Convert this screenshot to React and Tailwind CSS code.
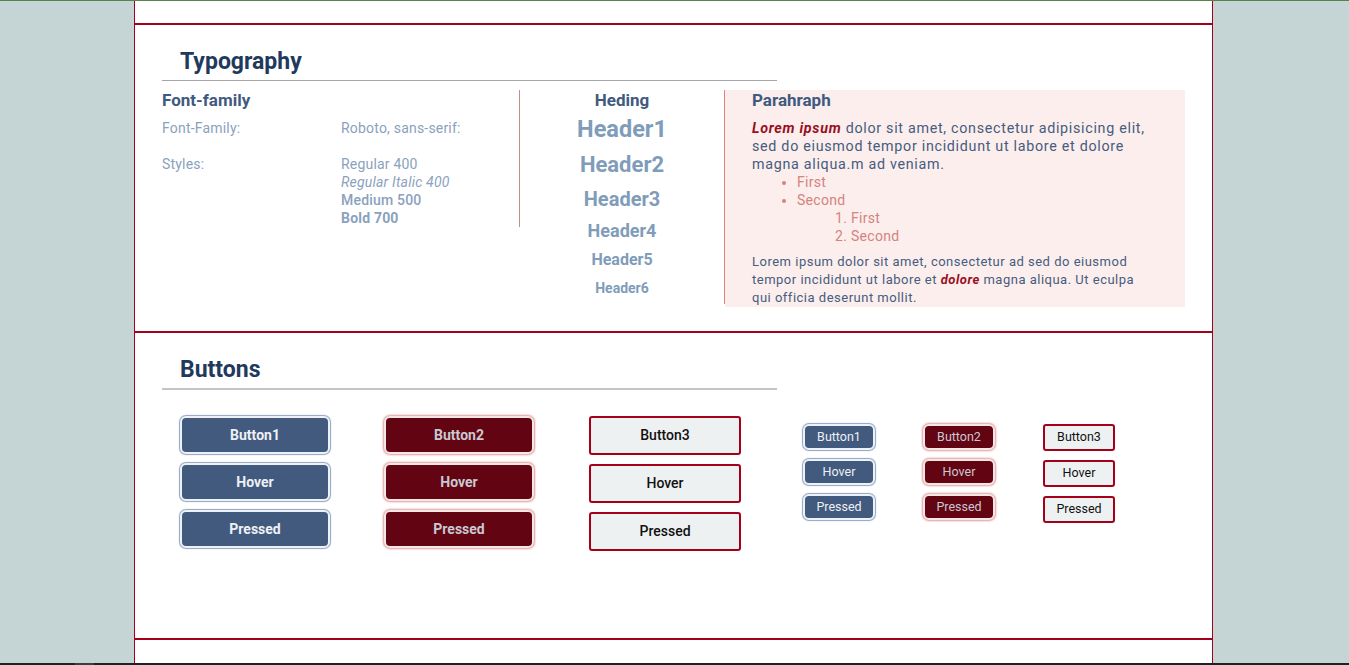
import React from "react";

const BigButton = ({ children, variant }) => {
  const styles = {
    blue: "bg-[#415a7e] border-2 border-[#eef2f7] text-[#eef0f5] font-bold shadow-[0_0_1px_1px_#8ea6c0]",
    red: "bg-[#620412] border-2 border-[#f6e6e6] text-[#c9c9d3] font-bold shadow-[0_0_2px_1px_#e09a9a]",
  };
  return (
    <button className={`w-[150px] h-[38px] rounded-md text-[14px] ${styles[variant]}`}>
      {children}
    </button>
  );
};

const SmallButton = ({ children, variant }) => {
  const styles = {
    blue: "bg-[#415a7e] border-2 border-[#eef2f7] text-[#eef0f5] shadow-[0_0_1px_1px_#8ea6c0]",
    red: "bg-[#620412] border-2 border-[#f6e6e6] text-[#c9c9d3] shadow-[0_0_2px_1px_#e09a9a]",
  };
  return (
    <button className={`w-[72px] h-[26px] rounded-md text-[12.5px] ${styles[variant]}`}>
      {children}
    </button>
  );
};

const SectionTitle = ({ children, line }) => (
  <div className={`w-[615px] pb-[5px] ${line}`}>
    <h2 className="pl-[18px] text-[23px] leading-[27px] font-bold text-[#1f3a5d]">{children}</h2>
  </div>
);

const headers = [
  { label: "Header1", cls: "text-[23.5px] leading-[38px]" },
  { label: "Header2", cls: "text-[22px] leading-[34px]" },
  { label: "Header3", cls: "text-[20px] leading-[34px]" },
  { label: "Header4", cls: "text-[18px] leading-[30px]" },
  { label: "Header5", cls: "text-[16px] leading-[28px]" },
  { label: "Header6", cls: "text-[14px] leading-[28px]" },
];

export default function App() {
  return (
    <div className="h-screen overflow-hidden bg-[#c5d4d4] font-[Roboto,sans-serif] flex flex-col">
      <div className="h-px bg-[#58834c] shrink-0"></div>
      <div className="flex-1 ml-[134px] w-[1079px] bg-white border-x border-[#a50019] flex flex-col">
        <div className="h-[24px] border-b-2 border-[#a50019] shrink-0"></div>

        {/* typography */}
        <section className="h-[308px] shrink-0 border-b-2 border-[#a50019] px-[27px] pt-[23px]">
          <SectionTitle line="border-b border-[#a6a6a6]">Typography</SectionTitle>
          <div className="mt-[9px] flex items-start">
            {/* font family */}
            <div className="w-[358px] border-r border-[#c09090]">
              <h3 className="text-[17px] leading-[20px] font-bold text-[#3f5a80]">Font-family</h3>
              <div className="mt-[9px] flex text-[14px] leading-[18px] tracking-[0.2px] text-[#8aa2bd]">
                <span className="w-[179px]">Font-Family:</span>
                <span>Roboto, sans-serif:</span>
              </div>
              <div className="mt-[18px] flex text-[14px] leading-[18px] tracking-[0.2px] text-[#8aa2bd]">
                <span className="w-[179px]">Styles:</span>
                <div className="flex flex-col">
                  <span>Regular 400</span>
                  <span className="italic">Regular Italic 400</span>
                  <span className="font-medium">Medium 500</span>
                  <span className="font-bold">Bold 700</span>
                </div>
              </div>
            </div>
            {/* headings */}
            <div className="w-[205px] border-r border-[#df8277] flex flex-col items-center pb-[2px]">
              <h3 className="text-[17px] leading-[20px] font-bold text-[#3f5a80]">Heding</h3>
              {headers.map((h) => (
                <div key={h.label} className={`font-bold text-[#7f9cba] ${h.cls}`}>
                  {h.label}
                </div>
              ))}
            </div>
            {/* paragraph */}
            <div className="w-[460px] bg-[#fbeeec] pl-[27px] h-[217px]">
              <div className="w-[400px]">
                <h3 className="text-[17px] leading-[20px] font-bold text-[#3f5a80]">Parahraph</h3>
                <p className="mt-[9px] text-[14.3px] leading-[18px] tracking-[0.7px] text-[#465c80]">
                  <b className="italic text-[#9a0f1f]">Lorem ipsum</b> dolor sit amet, consectetur adipisicing
                  elit, sed do eiusmod tempor incididunt ut labore et dolore magna aliqua.m ad veniam.
                </p>
                <ul className="list-disc pl-[45px] text-[14px] leading-[18px] text-[#d4837f] tracking-[0.3px]">
                  <li>First</li>
                  <li>
                    Second
                    <ol className="list-decimal pl-[54px]">
                      <li>First</li>
                      <li>Second</li>
                    </ol>
                  </li>
                </ul>
                <p className="mt-[8px] text-[13px] leading-[18px] tracking-[0.5px] text-[#465c80]">
                  Lorem ipsum dolor sit amet, consectetur ad sed do eiusmod tempor incididunt ut labore et{" "}
                  <b className="italic text-[#9a0f1f]">dolore</b> magna aliqua. Ut eculpa qui officia deserunt
                  mollit.
                </p>
              </div>
            </div>
          </div>
        </section>

        {/* buttons */}
        <section className="h-[307px] shrink-0 border-b-2 border-[#a50019] px-[27px] pt-[23px]">
          <SectionTitle line="border-b-2 border-[#c4c4c4]">Buttons</SectionTitle>
          <div className="mt-[26px] pl-[18px] flex items-start">
            <div className="flex flex-col gap-[9px]">
              <BigButton variant="blue">Button1</BigButton>
              <BigButton variant="blue">Hover</BigButton>
              <BigButton variant="blue">Pressed</BigButton>
            </div>
            <div className="ml-[54px] flex flex-col gap-[9px]">
              <BigButton variant="red">Button2</BigButton>
              <BigButton variant="red">Hover</BigButton>
              <BigButton variant="red">Pressed</BigButton>
            </div>
            <div className="ml-[55px] flex flex-col gap-[9px]">
              {["Button3", "Hover", "Pressed"].map((t) => (
                <button
                  key={t}
                  className="w-[152px] h-[39px] rounded-[3px] border-2 border-[#a50019] bg-[#eef1f2] text-[14px] font-medium text-[#111]"
                >
                  {t}
                </button>
              ))}
            </div>
            <div className="ml-[62px] mt-[8px] flex flex-col gap-[9px]">
              <SmallButton variant="blue">Button1</SmallButton>
              <SmallButton variant="blue">Hover</SmallButton>
              <SmallButton variant="blue">Pressed</SmallButton>
            </div>
            <div className="ml-[48px] mt-[8px] flex flex-col gap-[9px]">
              <SmallButton variant="red">Button2</SmallButton>
              <SmallButton variant="red">Hover</SmallButton>
              <SmallButton variant="red">Pressed</SmallButton>
            </div>
            <div className="ml-[48px] mt-[8px] flex flex-col gap-[9px]">
              {["Button3", "Hover", "Pressed"].map((t) => (
                <button
                  key={t}
                  className="w-[72px] h-[27px] rounded-[3px] border-2 border-[#a50019] bg-[#eef1f2] text-[12.5px] text-[#111]"
                >
                  {t}
                </button>
              ))}
            </div>
          </div>
        </section>

        <div className="flex-1"></div>
      </div>
      <div className="h-[2px] bg-[#1d2324] shrink-0 flex">
        <div className="ml-[75px] w-[19px] bg-[#3a3f40]"></div>
      </div>
    </div>
  );
}
